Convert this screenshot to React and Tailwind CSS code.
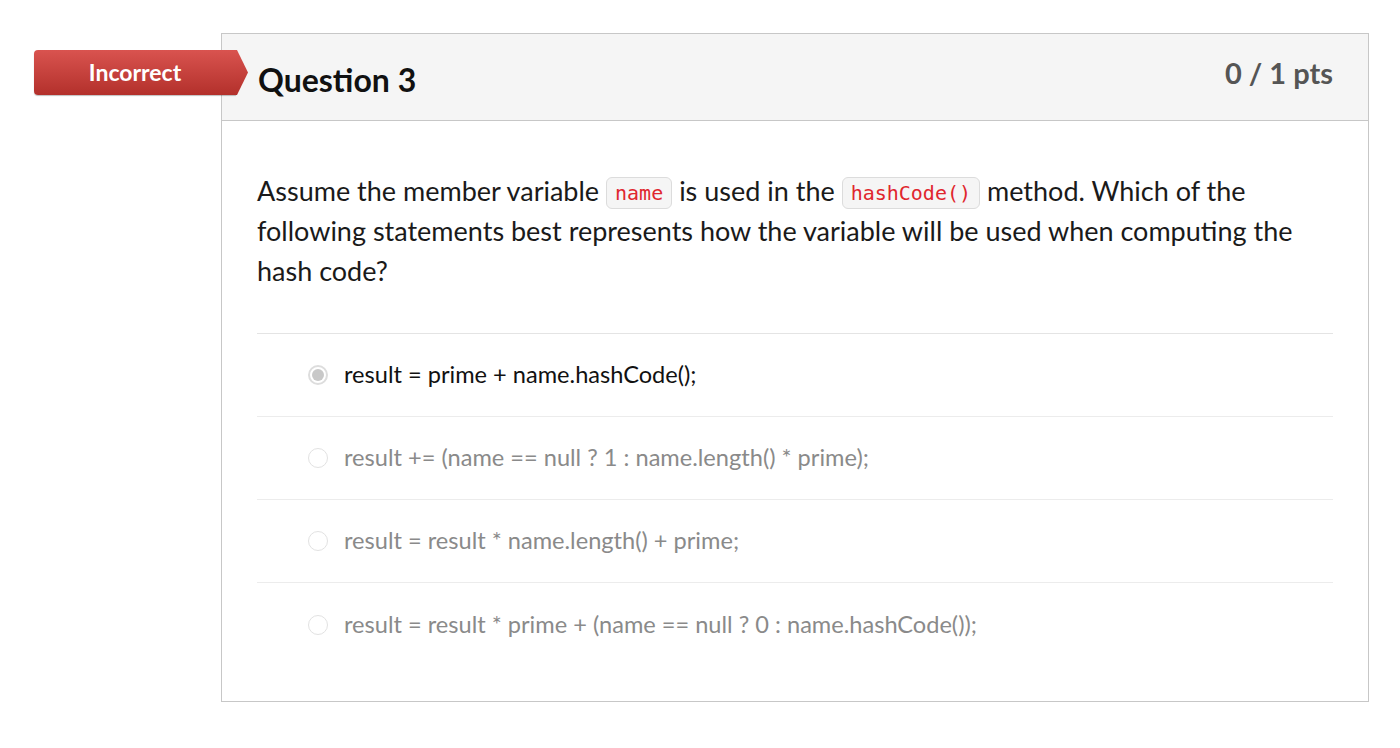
export default function App() {
  const answers = [
    { text: "result = prime + name.hashCode();", selected: true },
    { text: "result += (name == null ? 1 : name.length() * prime);" },
    { text: "result = result * name.length() + prime;" },
    { text: "result = result * prime + (name == null ? 0 : name.hashCode());" },
  ];

  return (
    <div className="min-h-screen bg-white pt-[33px] pl-[221px] pr-[31px] font-['Lato',sans-serif] text-[#1a1a1a]">
      <div className="relative border border-[#c7c7c7]">
        {/* Incorrect ribbon */}
        <div className="absolute left-[-188px] top-[16px] flex h-[45px] items-center">
          <div className="flex h-[45px] w-[202px] items-center justify-center rounded-l-[4px] bg-gradient-to-b from-[#d9534f] to-[#b3302b] text-[23px] font-bold text-white shadow-[0_1px_1px_rgba(0,0,0,0.25)]">
            Incorrect
          </div>
          <svg width="12" height="45" viewBox="0 0 12 45" className="block">
            <defs>
              <linearGradient id="rib" x1="0" y1="0" x2="0" y2="1">
                <stop offset="0" stopColor="#d9534f" />
                <stop offset="1" stopColor="#b3302b" />
              </linearGradient>
            </defs>
            <path d="M0 0 L1 0 L12 22.5 L1 45 L0 45 Z" fill="url(#rib)" />
          </svg>
        </div>

        {/* Header */}
        <div className="flex h-[87px] items-start justify-between border-b border-[#c7c7c7] bg-[#f5f5f5] pl-[36px] pr-[35px]">
          <h2 className="pt-[27px] text-[32px] font-bold leading-[38px] text-[#111]">Question 3</h2>
          <div className="pt-[21px] text-[29px] font-bold leading-[36px] text-[#555]">0 / 1 pts</div>
        </div>

        {/* Body */}
        <div className="px-[35px] pb-[35px] pt-[50px]">
          <p className="text-[27px] leading-[40px] text-[#1a1a1a]">
            Assume the member variable{" "}
            <code className="inline-block rounded-[6px] border border-[#dcdcdc] bg-[#f5f5f5] px-[8px] align-[1px] font-['DejaVu_Sans_Mono',monospace] text-[20px] leading-[30px] text-[#e0262e]">
              name
            </code>{" "}
            is used in the{" "}
            <code className="inline-block rounded-[6px] border border-[#dcdcdc] bg-[#f5f5f5] px-[8px] align-[1px] font-['DejaVu_Sans_Mono',monospace] text-[20px] leading-[30px] text-[#e0262e]">
              hashCode()
            </code>{" "}
            method. Which of the following statements best represents how the variable will be used when computing
            the hash code?
          </p>

          <div className="mt-[42px] border-t border-[#e4e4e4]">
            {answers.map((a, i) => (
              <div
                key={i}
                className={
                  "flex h-[83px] items-center gap-[16px] pl-[51px] " +
                  (i < answers.length - 1 ? "border-b border-[#ececec]" : "")
                }
              >
                {a.selected ? (
                  <span className="flex h-[20px] w-[20px] items-center justify-center rounded-full border-[2px] border-[#dddddd] bg-white">
                    <span className="h-[12px] w-[12px] rounded-full bg-[#c8c8c8]" />
                  </span>
                ) : (
                  <span className="h-[20px] w-[20px] rounded-full border border-[#e2e2e2] bg-white" />
                )}
                <span className={"text-[23.6px] " + (a.selected ? "text-[#111]" : "text-[#8a8a8a]")}>{a.text}</span>
              </div>
            ))}
          </div>
        </div>
      </div>
    </div>
  );
}
